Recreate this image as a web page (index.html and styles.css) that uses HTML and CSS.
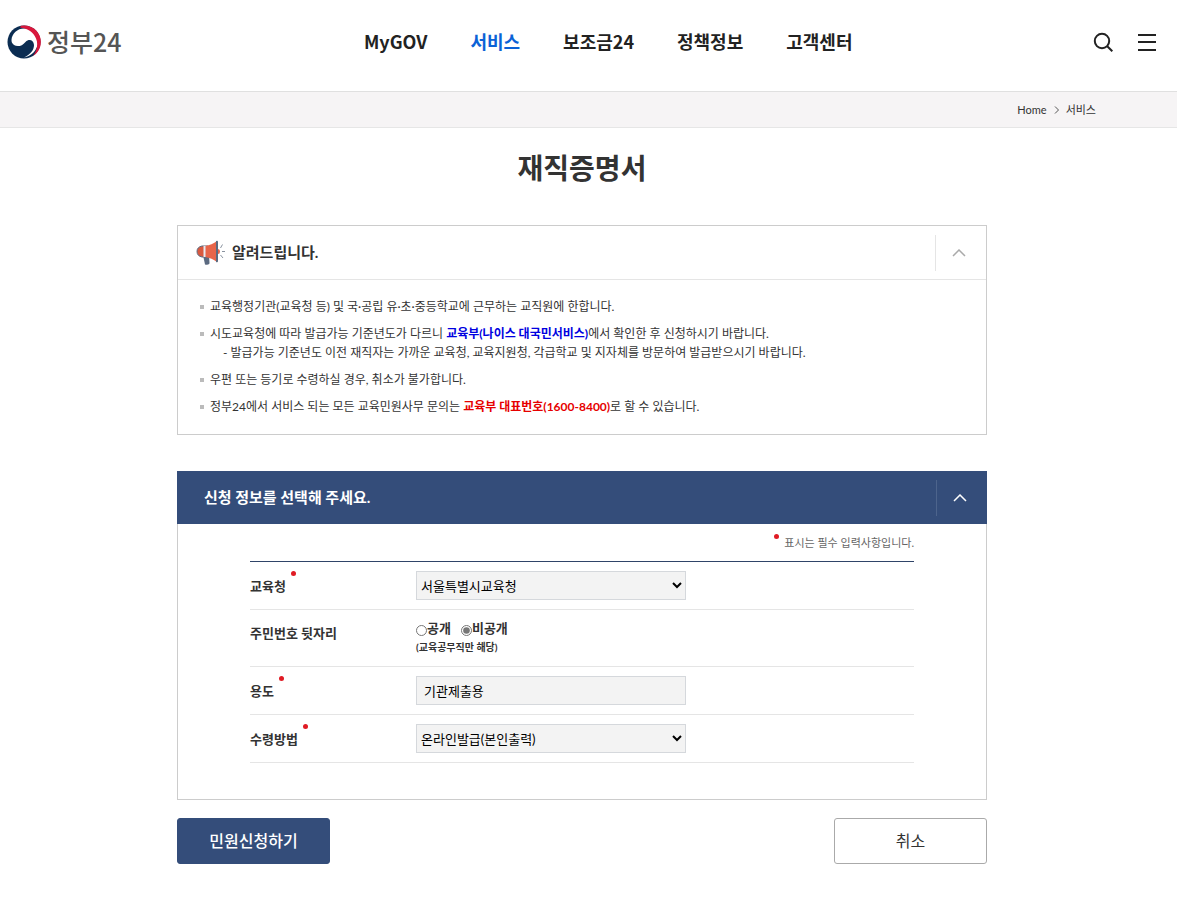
FILE: index.html
```html
<!DOCTYPE html>
<html lang="ko">
<head>
  <meta charset="UTF-8">
  <meta name="viewport" content="width=device-width, initial-scale=1.0">
  <title>재직증명서 | 정부24</title>
  <link rel="stylesheet" href="styles.css">
</head>
<body>

  <!-- 헤더 -->
  <header class="header">
    <a class="logo" href="#">
      <svg class="logo-mark" viewBox="0 0 34 34" aria-hidden="true">
        <circle cx="17" cy="17" r="16.5" fill="#0b2d52"/>
        <path d="M4.500 15C5 8 11 3 18 3.500C26 4.500 31 11 31 17C30.500 25 25 31 17 32.500C24 29 27 25 27 20C26.500 15 22 13.500 18.500 17C15 21.500 10 22 7 20C5 18.500 4.500 17 4.500 15Z" fill="#fff"/>
        <path d="M14 0.800A16.500 16.500 0 0 1 26 31C30 26 31.500 19 29 13.500C26.500 7 21 3.500 13 2.500Z" fill="#d9173c"/>
      </svg>
      <span class="logo-text">정부24</span>
    </a>
    <nav class="nav">
      <a href="#">MyGOV</a>
      <a class="active" href="#">서비스</a>
      <a href="#">보조금24</a>
      <a href="#">정책정보</a>
      <a href="#">고객센터</a>
    </nav>
    <div class="tools">
      <button type="button" class="icon-btn" aria-label="검색">
        <svg width="20" height="20" viewBox="0 0 20 20"><circle cx="9" cy="9" r="7.200"/><path d="M14 14L19.300 19.300"/></svg>
      </button>
      <button type="button" class="icon-btn" aria-label="전체메뉴">
        <svg width="20" height="20" viewBox="0 0 20 20"><path d="M1 3H19M1 10H19M1 18H19"/></svg>
      </button>
    </div>
  </header>

  <!-- 현재 위치 -->
  <div class="breadcrumb">
    <a href="#">Home</a>
    <svg width="5" height="8" viewBox="0 0 5 8"><path d="M1 0.500L4.500 4L1 7.500"/></svg>
    <a href="#">서비스</a>
  </div>

  <main class="container">
    <h1 class="title">재직증명서</h1>

    <!-- 안내 -->
    <section class="notice">
      <div class="notice-head">
        <svg class="megaphone" width="30" height="26" viewBox="0 0 30 26" aria-hidden="true">
          <path d="M7 15H13L13.500 23.500Q12 25.500 9 24.500Z" fill="#5b6a80"/>
          <path d="M6 6H12V17H6Q1 16 1 11.500Q1 7 6 6Z" fill="#d9593f" stroke="#5b6a80"/>
          <path d="M9 6Q16 5 21 1V22Q16 18 9 17Z" fill="#e8654a"/>
          <path d="M7.500 6H9.500V17H7.500Z" fill="#e9eaf0"/>
          <path d="M20 1Q22 0 22 2V21Q22 23 20 22Z" fill="#5b6a80"/>
          <path d="M22 9Q24 9 24 11.500Q24 14 22 14Z" fill="#e8654a"/>
          <path d="M24.500 8L26.500 4.500M26 11.500H29M24.500 15L27 18" stroke="#8a93a0" fill="none"/>
        </svg>
        <h2>알려드립니다.</h2>
        <button type="button" class="toggle" aria-label="접기">
          <svg width="14" height="8" viewBox="0 0 14 8"><path d="M1 7L7 1L13 7"/></svg>
        </button>
      </div>
      <ul class="notice-list">
        <li>교육행정기관(교육청 등) 및 국·공립 유·초·중등학교에 근무하는 교직원에 한합니다.</li>
        <li>시도교육청에 따라 발급가능 기준년도가 다르니 <a href="#">교육부(나이스 대국민서비스)</a>에서 확인한 후 신청하시기 바랍니다.
          <p>- 발급가능 기준년도 이전 재직자는 가까운 교육청, 교육지원청, 각급학교 및 지자체를 방문하여 발급받으시기 바랍니다.</p>
        </li>
        <li>우편 또는 등기로 수령하실 경우, 취소가 불가합니다.</li>
        <li>정부24에서 서비스 되는 모든 교육민원사무 문의는 <strong>교육부 대표번호(1600-8400)</strong>로 할 수 있습니다.</li>
      </ul>
    </section>

    <!-- 신청 정보 -->
    <form>
      <section class="apply">
        <div class="apply-head">
          <h2>신청 정보를 선택해 주세요.</h2>
          <button type="button" class="toggle" aria-label="접기">
            <svg width="14" height="8" viewBox="0 0 14 8"><path d="M1 7L7 1L13 7"/></svg>
          </button>
        </div>
        <div class="apply-body">
          <p class="required-note"><span class="dot"></span>표시는 필수 입력사항입니다.</p>
          <div class="rows">
            <div class="row">
              <label class="name" for="office">교육청<span class="dot"></span></label>
              <select class="field" id="office"><option>서울특별시교육청</option></select>
            </div>
            <div class="row" role="radiogroup" aria-labelledby="rrn">
              <span class="name" id="rrn">주민번호 뒷자리</span>
              <div>
                <div class="radios">
                  <label><input type="radio" name="open">공개</label>
                  <label><input type="radio" name="open" checked>비공개</label>
                </div>
                <p class="hint">(교육공무직만 해당)</p>
              </div>
            </div>
            <div class="row">
              <label class="name" for="purpose">용도<span class="dot"></span></label>
              <input class="field" type="text" id="purpose" value="기관제출용">
            </div>
            <div class="row">
              <label class="name" for="receive">수령방법<span class="dot"></span></label>
              <select class="field" id="receive"><option>온라인발급(본인출력)</option></select>
            </div>
          </div>
        </div>
      </section>

      <div class="actions">
        <button type="submit" class="btn primary">민원신청하기</button>
        <button type="button" class="btn">취소</button>
      </div>
    </form>
  </main>

</body>
</html>
```

FILE: styles.css
```css
* {
  box-sizing: border-box;
}

body, h1, h2, p, ul {
  margin: 0;
  padding: 0;
}

body {
  font-family: Lato, "Noto Sans CJK KR", sans-serif;
  font-size: 12px;
  line-height: 19px;
  color: #333;
  background: #fff;
}

a {
  color: inherit;
  text-decoration: none;
}

button, input, select {
  font-family: inherit;
  color: inherit;
}

svg {
  display: block;
}

/* 헤더 */
.header {
  display: grid;
  grid-template-columns: 357px auto 1fr;
  align-items: center;
  height: 91px;
  padding: 0 20px 8px 7px;
  font-family: "Noto Sans CJK KR", sans-serif;
}

.logo {
  display: flex;
  align-items: center;
  gap: 6px;
}

.logo-mark {
  width: 34px;
  height: 34px;
}

.logo-text {
  padding-bottom: 2px;
  font-size: 25px;
  line-height: 32px;
  font-weight: 500;
  color: #555;
}

.nav {
  display: flex;
  gap: 43px;
  padding-bottom: 2px;
  font-size: 18px;
  line-height: 26px;
  font-weight: bold;
  color: #222;
}

.nav .active {
  color: #0b62d6;
}

.tools {
  display: flex;
  justify-content: flex-end;
  gap: 24px;
}

.icon-btn {
  padding: 0;
  border: 0;
  background: none;
  cursor: pointer;
}

.icon-btn svg {
  fill: none;
  stroke: #222;
  stroke-width: 2;
}

/* 현재 위치 */
.breadcrumb {
  display: flex;
  justify-content: flex-end;
  align-items: center;
  gap: 7px;
  height: 37px;
  padding-right: 81px;
  border-top: 1px solid #e0e0e0;
  border-bottom: 1px solid #e6e6e6;
  background: #f6f4f5;
  font-size: 11px;
}

.breadcrumb svg {
  fill: none;
  stroke: #555;
}

/* 본문 */
.container {
  width: calc(100% - 13px);
  max-width: 1164px;
  padding: 0 177px;
}

.title {
  padding: 20px 0 37px;
  font-size: 28px;
  line-height: 40px;
  text-align: center;
}

.toggle {
  display: flex;
  align-items: center;
  justify-content: center;
  width: 51px;
  height: 36px;
  margin-left: auto;
  padding: 0 4px 0 0;
  border: 0;
  border-left: 1px solid #e5e5e5;
  background: none;
  cursor: pointer;
}

.toggle svg {
  fill: none;
  stroke: #aaa;
  stroke-width: 1.5;
}

/* 안내 */
.notice {
  border: 1px solid #ccc;
}

.notice-head {
  display: flex;
  align-items: center;
  height: 54px;
  padding-left: 18px;
  border-bottom: 1px solid #e5e5e5;
}

.notice-head h2 {
  margin-left: 6px;
  font-size: 15px;
}

.notice-list {
  display: flex;
  flex-direction: column;
  gap: 8px;
  padding: 17px 22px 18px;
  list-style: none;
}

.notice-list li {
  padding-left: 10px;
  background: linear-gradient(#bbb, #bbb) 0 8px / 4px 4px no-repeat;
}

.notice-list p {
  padding-left: 13px;
}

.notice-list a {
  font-weight: bold;
  color: #0000e0;
}

.notice-list strong {
  color: #e60000;
}

/* 신청 정보 */
.apply {
  margin-top: 36px;
}

.apply-head {
  display: flex;
  align-items: center;
  height: 53px;
  padding-left: 27px;
  background: #344d7a;
  color: #fff;
}

.apply-head h2 {
  font-size: 15px;
}

.apply-head .toggle {
  border-color: #4d648c;
}

.apply-head .toggle svg {
  stroke: #fff;
}

.apply-body {
  padding: 0 72px 36px;
  border: 1px solid #ccc;
  border-top: 0;
}

.dot {
  display: inline-block;
  width: 5px;
  height: 5px;
  margin: 0 5px;
  border-radius: 50%;
  background: #e01b24;
  vertical-align: 15px;
}

.required-note {
  height: 37px;
  padding-top: 9px;
  font-size: 11px;
  text-align: right;
  color: #666;
}

.required-note .dot {
  vertical-align: 8px;
}

.rows {
  border-top: 1px solid #2f4468;
}

.row {
  display: grid;
  grid-template-columns: 166px 1fr;
  align-items: start;
  padding: 9px 0;
  border-bottom: 1px solid #e5e5e5;
  font-size: 13px;
  font-weight: bold;
}

.name {
  height: 29px;
  line-height: 29px;
}

.field {
  width: 270px;
  height: 29px;
  padding: 0 7px;
  border: 1px solid #d5d8dc;
  border-radius: 0;
  background: #f3f3f3;
  font-size: 13px;
  color: #000;
}

select.field {
  padding: 0;
}

.radios {
  display: flex;
  gap: 10px;
}

.radios label {
  display: flex;
  align-items: center;
}

.radios input {
  width: 11px;
  height: 11px;
  margin: 4px 0 0;
  accent-color: #767676;
}

.hint {
  font-size: 10px;
}

/* 버튼 */
.actions {
  display: flex;
  justify-content: space-between;
  margin-top: 18px;
}

.btn {
  width: 153px;
  height: 46px;
  padding: 0 0 2px;
  border: 1px solid #aaa;
  border-radius: 3px;
  background: #fff;
  font-size: 16px;
  cursor: pointer;
}

.btn.primary {
  border-color: #344d7a;
  background: #344d7a;
  color: #fff;
  font-weight: 500;
}
```
